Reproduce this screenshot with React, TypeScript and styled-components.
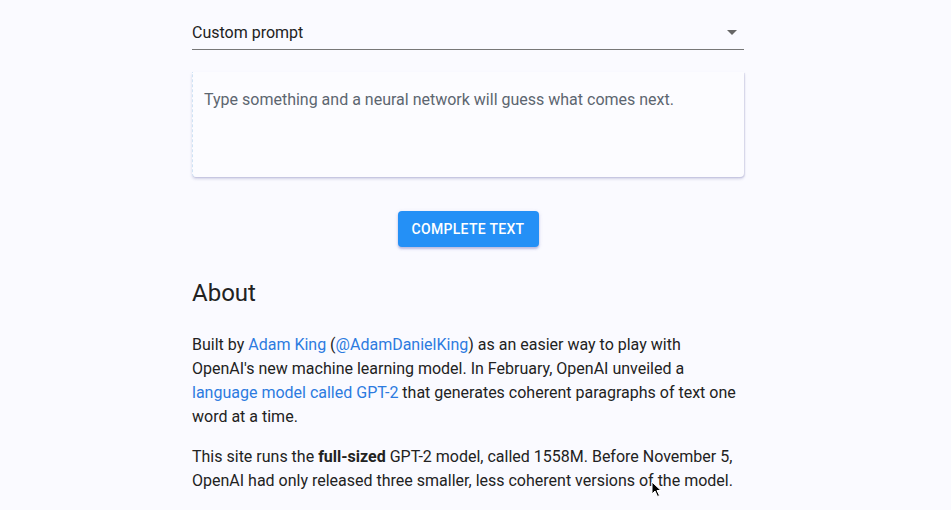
import { FC } from "react";
import styled, { createGlobalStyle } from "styled-components";

const GlobalStyle = createGlobalStyle`
  html, body {
    margin: 0;
    padding: 0;
    background: #fafaff;
  }
  body {
    font-family: Roboto, "Noto Sans", Arial, sans-serif;
    color: #222;
    -webkit-font-smoothing: antialiased;
  }
`;

const Page = styled.div`
  position: relative;
  height: 510px;
  overflow: hidden;
`;

const Column = styled.div`
  width: 552px;
  margin-left: 192px;
  display: flex;
  flex-direction: column;
`;

const Select = styled.div`
  margin-top: 15px;
  height: 34px;
  display: flex;
  align-items: center;
  justify-content: space-between;
  border-bottom: 1px solid #777;
  font-size: 16px;
  color: #222;
`;

const Card = styled.div`
  margin-top: 22px;
  height: 105px;
  box-sizing: border-box;
  padding: 18px 11px;
  background: #fcfcff;
  border-radius: 0 0 4px 4px;
  border-left: 1px dashed #cfe3f5;
  box-shadow: 0 2px 3px rgba(60, 60, 140, 0.2), 1px 1px 1px rgba(60, 60, 140, 0.12);
`;

const Placeholder = styled.div`
  font-size: 16px;
  line-height: 20px;
  color: #5c6670;
`;

const ButtonRow = styled.div`
  margin-top: 34px;
  display: flex;
  justify-content: center;
`;

const Button = styled.button`
  height: 36px;
  width: 141px;
  border: none;
  border-radius: 4px;
  background: #2490f6;
  color: #fff;
  font-family: Roboto, Arial, sans-serif;
  font-weight: 500;
  font-size: 14px;
  letter-spacing: 0.3px;
  text-transform: uppercase;
  box-shadow: 0 2px 2px rgba(60, 60, 160, 0.25), 0 1px 4px rgba(60, 60, 160, 0.15);
  cursor: pointer;
`;

const Heading = styled.h2`
  margin: 30px 0 0;
  font-size: 24px;
  line-height: 32px;
  font-weight: 400;
  color: #222;
`;

const Paragraph = styled.p<{ $first?: boolean }>`
  margin: ${(p) => (p.$first ? "24px" : "16px")} 0 0;
  font-size: 16px;
  line-height: 24px;
  color: #222;
`;

const Link = styled.a`
  color: #2c7be0;
  text-decoration: none;
`;

const Cursor = styled.svg`
  position: absolute;
  left: 651px;
  top: 481px;
`;

const App: FC = () => {
  return (
    <Page>
      <GlobalStyle />
      <Column>
        <Select>
          <span>Custom prompt</span>
          <svg width="24" height="24" viewBox="0 0 24 24">
            <path d="M7 10l5 5 5-5z" fill="#666" />
          </svg>
        </Select>
        <Card>
          <Placeholder>
            Type something and a neural network will guess what comes next.
          </Placeholder>
        </Card>
        <ButtonRow>
          <Button>Complete text</Button>
        </ButtonRow>
        <Heading>About</Heading>
        <Paragraph $first>
          Built by <Link href="#">Adam King</Link> (
          <Link href="#">@AdamDanielKing</Link>) as an easier way to play with
          OpenAI's new machine learning model. In February, OpenAI unveiled a{" "}
          <Link href="#">language model called GPT-2</Link> that generates
          coherent paragraphs of text one word at a time.
        </Paragraph>
        <Paragraph>
          This site runs the <b>full-sized</b> GPT-2 model, called 1558M.
          Before November 5, OpenAI had only released three smaller, less
          coherent versions of the model.
        </Paragraph>
      </Column>
      <Cursor width="12" height="17" viewBox="0 0 12 17">
        <path
          d="M1 1 L1 13 L4 10 L6.5 15.5 L8.5 14.5 L6 9.5 L10 9.5 Z"
          fill="#000"
          stroke="#fff"
          strokeWidth="1"
        />
      </Cursor>
    </Page>
  );
};

export default App;
